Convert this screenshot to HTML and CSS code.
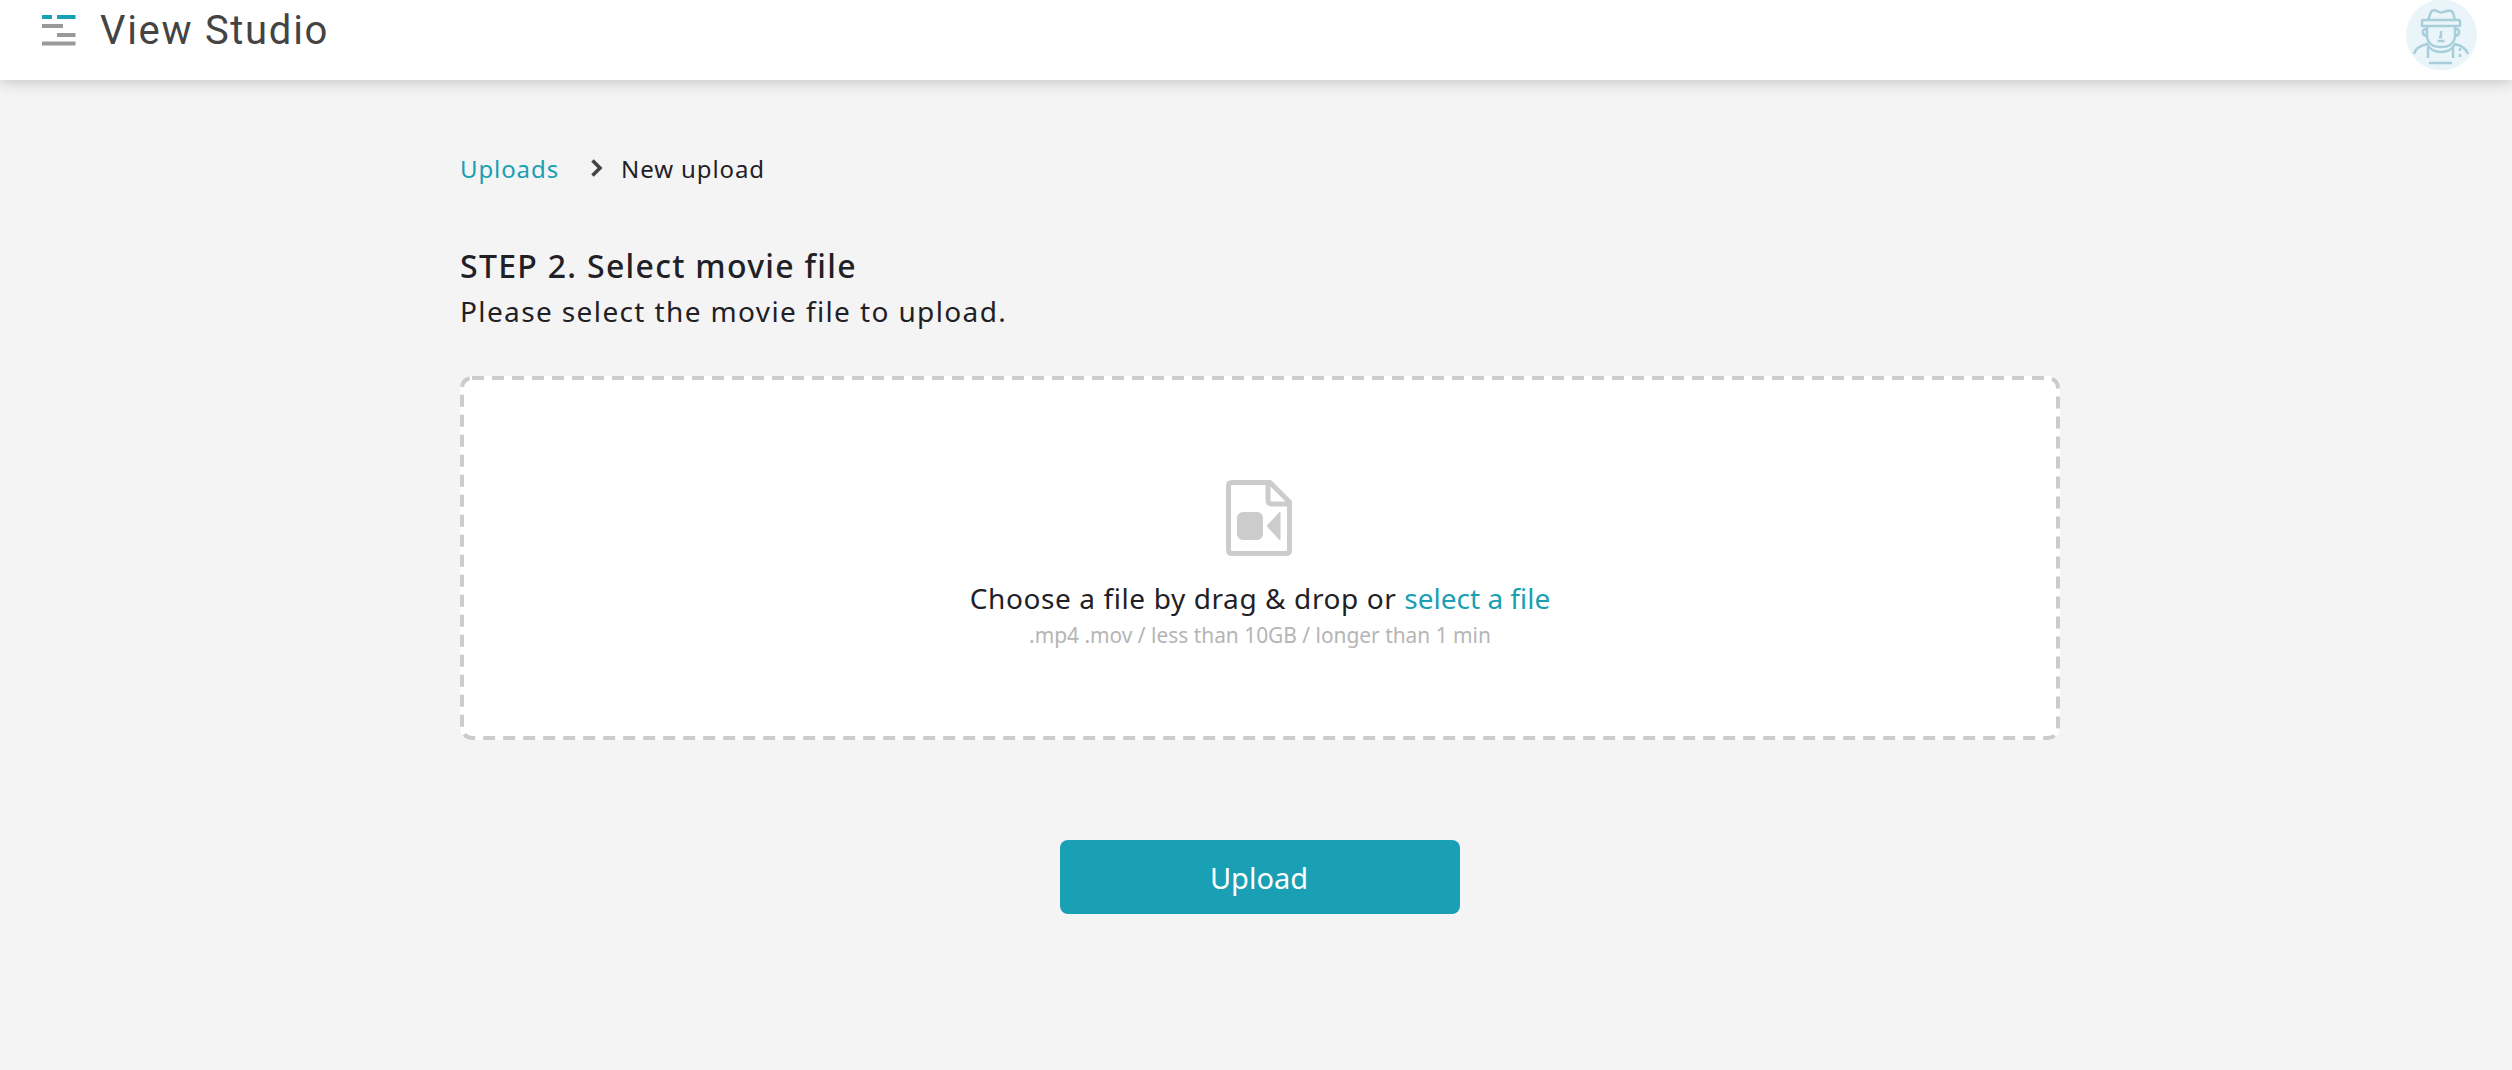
FILE: index.html
```html
<!DOCTYPE html>
<html lang="en">

<head>
    <meta charset="UTF-8">
    <title>View Studio</title>
    <link rel="stylesheet" href="styles.css">
</head>

<body>
    <header class="topbar">
        <div class="brand">
            <svg class="menu-icon" width="34" height="31" viewBox="0 0 34 31">
                <rect x="0" y="0" width="10" height="4" fill="#1aa0b4" />
                <rect x="15" y="0" width="18.500" height="4" fill="#1aa0b4" />
                <rect x="0" y="9" width="21" height="4" fill="#999" />
                <rect x="15" y="18" width="18.500" height="4" fill="#999" />
                <rect x="0" y="26.500" width="33.500" height="4" fill="#999" />
            </svg>
            <span class="brand-name">View Studio</span>
        </div>
        <div class="avatar">
            <svg width="71" height="71" viewBox="0 0 71 71">
                <circle cx="35.500" cy="35" r="35.500" fill="#e9f5f8" />
                <g fill="none" stroke="#a8cedb" stroke-width="2.500">
                    <path d="M22 20 L25 12 Q27 9 31 11 Q35 13.500 39 11.500 L43 10.500 Q46 10.500 47 13 L49 20" />
                    <rect x="16" y="20" width="38" height="6" rx="1" />
                    <path d="M21 26 V36 Q22 47 35 47 Q48 47 49 36 V26" />
                    <path d="M21 29 Q16 29 17 33 Q18 36 21 36 M49 29 Q54 29 53 33 Q52 36 49 36" />
                    <path d="M35 31 V37 H33 M31.500 41 H38.500" />
                    <path d="M8 54 Q9 47 21 44 Q25 52 35 52 Q45 52 49 44 Q60 47 62 54" />
                    <path d="M22 47 V58 M47 47 V58 M23 63 H46" />
                    <path d="M54 48 V60" stroke-dasharray="3 3" />
                </g>
            </svg>
        </div>
    </header>

    <main class="container">
        <nav class="breadcrumb">
            <a href="#" class="link">Uploads</a>
            <svg class="crumb-arrow" width="13" height="18" viewBox="0 0 13 18">
                <path d="M2.500 1.500 L10 9 L2.500 16.500" fill="none" stroke="#444" stroke-width="3.600" />
            </svg>
            <span>New upload</span>
        </nav>

        <h2 class="step-title">STEP 2. Select movie file</h2>
        <p class="step-desc">Please select the movie file to upload.</p>

        <div class="dropzone">
            <svg class="dash-border" width="1600" height="364" viewBox="0 0 1600 364">
                <rect x="2" y="2" width="1596" height="360" rx="10" />
            </svg>
            <svg class="file-icon" width="66" height="76" viewBox="0 0 66 76">
                <path d="M6 2.500 H44 L63.500 22 V70 Q63.500 73.500 60 73.500 H6 Q2.500 73.500 2.500 70 V6 Q2.500 2.500 6 2.500 Z" fill="none" stroke="#ccc" stroke-width="5" stroke-linejoin="round" />
                <path d="M42 3 V20 Q42 24 46 24 H63" fill="none" stroke="#ccc" stroke-width="5" />
                <rect x="11" y="32" width="26" height="28" rx="6" fill="#ccc" />
                <path d="M41 46 L54 32 V60 Z" fill="#ccc" stroke="#ccc" stroke-width="1" stroke-linejoin="round" />
            </svg>
            <p class="drop-text">Choose a file by drag &amp; drop or <a href="#" class="link select-link">select a file</a></p>
            <p class="drop-hint">.mp4 .mov / less than 10GB / longer than 1 min</p>
        </div>

        <div class="actions">
            <button class="upload-button">Upload</button>
        </div>
    </main>
</body>

</html>
```

FILE: styles.css
```css
* {
    margin: 0;
    padding: 0;
    box-sizing: border-box;
}

body {
    background-color: #f4f4f4;
    font-family: 'Noto Sans', Arial, sans-serif;
    color: #1f2126;
    min-height: 100vh;
}

.topbar {
    height: 80px;
    background-color: #fff;
    box-shadow: 0 2px 14px rgba(0, 0, 0, 0.2);
    display: flex;
    justify-content: space-between;
    padding: 0 35px 0 42px;
}

.brand {
    display: flex;
    align-items: flex-start;
    gap: 24px;
    padding-top: 15px;
}

.menu-icon {
    display: block;
}

.brand-name {
    font-family: Roboto, Arial, sans-serif;
    font-size: 40px;
    font-weight: 400;
    letter-spacing: 1.700px;
    line-height: 32px;
    color: #444;
}

.avatar {
    height: 71px;
}

.container {
    width: 1600px;
    margin-left: 460px;
}

.link {
    color: #1a9fb3;
    text-decoration: none;
}

.breadcrumb {
    display: flex;
    align-items: center;
    margin-top: 71px;
    height: 34px;
    font-size: 24px;
    letter-spacing: 0.900px;
}

.crumb-arrow {
    margin: 0 18px 0 31px;
}

.step-title {
    font-size: 32px;
    font-weight: 500;
    line-height: 44px;
    margin-top: 59px;
    letter-spacing: 1.300px;
}

.step-desc {
    font-size: 28px;
    line-height: 40px;
    margin-top: 3px;
    letter-spacing: 1.380px;
}

.dropzone {
    position: relative;
    height: 364px;
    margin-top: 45px;
    background-color: #fff;
    border-radius: 12px;
    display: flex;
    flex-direction: column;
    align-items: center;
    padding-top: 104px;
}

.dash-border {
    position: absolute;
    top: 0;
    left: 0;
}

.dash-border rect {
    fill: none;
    stroke: #ccc;
    stroke-width: 4;
    stroke-dasharray: 12 8;
}

.file-icon {
    margin-right: 2px;
}

.drop-text {
    font-size: 28px;
    line-height: 40px;
    margin-top: 22px;
    letter-spacing: 0.600px;
}

.select-link {
    letter-spacing: 0;
}

.drop-hint {
    font-size: 20.900px;
    line-height: 30px;
    margin-top: 2px;
    color: #b5b5b5;
}

.actions {
    display: flex;
    justify-content: center;
    margin-top: 100px;
}

.upload-button {
    width: 400px;
    height: 74px;
    padding-right: 2px;
    background-color: #1aa0b4;
    border: none;
    border-radius: 8px;
    color: #fff;
    font-family: 'Noto Sans', Arial, sans-serif;
    font-size: 29px;
    cursor: pointer;
}
```
